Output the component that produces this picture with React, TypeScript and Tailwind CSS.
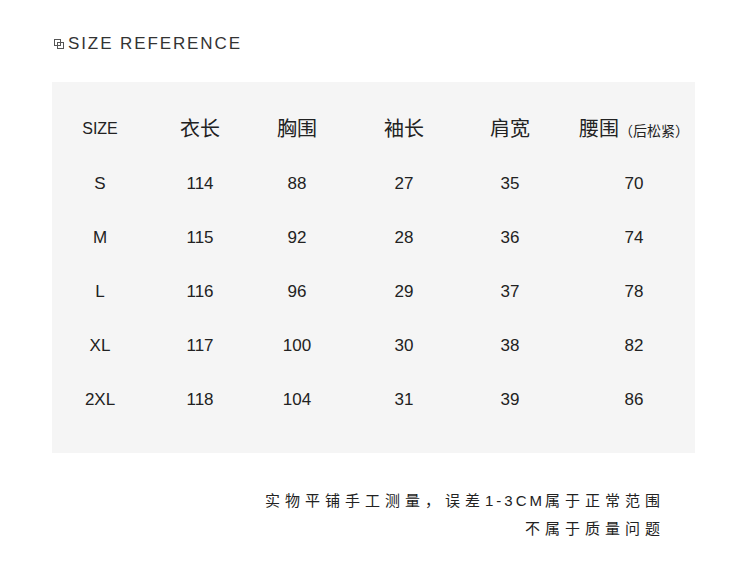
const rows = [
  ['S', '114', '88', '27', '35', '70'],
  ['M', '115', '92', '28', '36', '74'],
  ['L', '116', '96', '29', '37', '78'],
  ['XL', '117', '100', '30', '38', '82'],
  ['2XL', '118', '104', '31', '39', '86'],
];

const font = { fontFamily: '"Liberation Sans", "Noto Sans CJK SC", sans-serif' };
const grid = 'grid grid-cols-[96px_104px_90px_124px_88px_140px] h-[54.2px] items-center text-center';

function TitleIcon() {
  return (
    <svg width="10" height="10" viewBox="0 0 10 10" className="block flex-none">
      <rect x="0.5" y="0.5" width="6" height="6" fill="none" stroke="#555" strokeWidth="1" />
      <rect x="3.5" y="3.5" width="6" height="6" fill="none" stroke="#555" strokeWidth="1" />
    </svg>
  );
}

export default function App() {
  return (
    <div className="w-[750px] h-[581px] bg-white text-[#222]" style={font}>
      <div className="flex items-start gap-[4px] pl-[54px] pt-[34px] h-[82px]">
        <div className="mt-[5px]"><TitleIcon /></div>
        <span className="text-[17px] leading-[20px] tracking-[1.9px] text-[#333]">SIZE REFERENCE</span>
      </div>

      <div className="ml-[52px] w-[643px] h-[371px] bg-[#f5f5f5] pt-[20px]">
        <div className={grid}>
          <span className="text-[16px]">SIZE</span>
          <span className="text-[20px]">衣长</span>
          <span className="text-[20px]">胸围</span>
          <span className="text-[20px]">袖长</span>
          <span className="text-[20px]">肩宽</span>
          <span className="pl-[20px] text-[20px] whitespace-nowrap">
            腰围<span className="text-[14px]">（后松紧）</span>
          </span>
        </div>
        {rows.map((r) => (
          <div key={r[0]} className={grid}>
            {r.map((c, i) => (
              <span key={i} className={i === 5 ? 'pl-[20px] text-[17px]' : 'text-[17px]'}>
                {c}
              </span>
            ))}
          </div>
        ))}
      </div>

      <div className="w-[665px] pt-[34px] flex flex-col items-end text-[15px] leading-[28px] tracking-[5px] text-[#222]">
        <div>
          实物平铺手工测量，误差<span className="tracking-[3px]">1-3CM</span>属于正常范围
        </div>
        <div>不属于质量问题</div>
      </div>
    </div>
  );
}
